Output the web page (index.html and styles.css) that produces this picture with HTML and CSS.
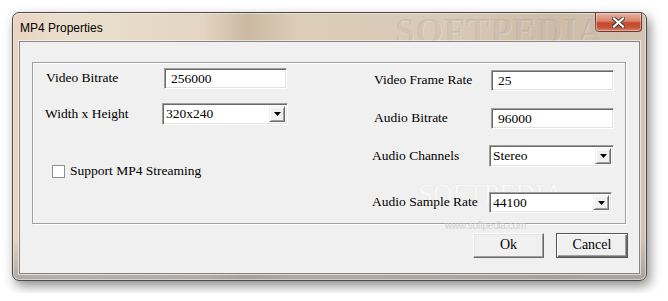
FILE: index.html
```html
<!DOCTYPE html>
<html lang="en">
<head>
  <meta charset="UTF-8">
  <meta name="viewport" content="width=device-width, initial-scale=1.0">
  <title>MP4 Properties</title>
  <link rel="stylesheet" href="styles.css">
</head>
<body>

  <div class="window">
    <div class="titlebar">
      <span class="title">MP4 Properties</span>
      <button class="close" type="button" aria-label="Close">
        <svg width="13" height="11" viewBox="0 0 13 11">
          <path d="M2 1.5 L11 9.5 M11 1.5 L2 9.5" stroke="#3a3a3a" stroke-width="4" stroke-linecap="square"/>
          <path d="M2 1.5 L11 9.5 M11 1.5 L2 9.5" stroke="#ffffff" stroke-width="2.2" stroke-linecap="square"/>
        </svg>
      </button>
    </div>
    <span class="mark-title">SOFTPEDIA</span>

    <div class="client">
      <span class="mark-mid">SOFTPEDIA<sup>™</sup></span>
      <span class="mark-url">www.softpedia.com</span>

      <div class="group">
        <div class="col col-left">
          <div class="row row-first">
            <label class="lbl lbl-wide" for="video_bitrate">Video Bitrate</label>
            <input class="field" type="text" id="video_bitrate" value="256000">
          </div>
          <div class="row row-size">
            <span class="lbl">Width x Height</span>
            <div class="combo combo-size">
              <span class="combo-value">320x240</span>
              <span class="combo-drop"><svg width="7" height="4" viewBox="0 0 7 4"><path d="M0 0 H7 L3.5 4 Z" fill="#000"/></svg></span>
            </div>
          </div>
          <div class="row row-check">
            <span class="check"></span>
            <span class="check-text">Support MP4 Streaming</span>
          </div>
        </div>

        <div class="col col-right">
          <div class="row row-frame">
            <label class="lbl lbl-in" for="frame_rate">Video Frame Rate</label>
            <input class="field" type="text" id="frame_rate" value="25">
          </div>
          <div class="row row-abitrate">
            <label class="lbl lbl-in" for="audio_bitrate">Audio Bitrate</label>
            <input class="field" type="text" id="audio_bitrate" value="96000">
          </div>
          <div class="row row-channels">
            <span class="lbl">Audio Channels</span>
            <div class="combo combo-wide">
              <span class="combo-value">Stereo</span>
              <span class="combo-drop"><svg width="7" height="4" viewBox="0 0 7 4"><path d="M0 0 H7 L3.5 4 Z" fill="#000"/></svg></span>
            </div>
          </div>
          <div class="row row-sample">
            <span class="lbl">Audio Sample Rate</span>
            <div class="combo combo-sample">
              <span class="combo-value">44100</span>
              <span class="combo-drop"><svg width="7" height="4" viewBox="0 0 7 4"><path d="M0 0 H7 L3.5 4 Z" fill="#000"/></svg></span>
            </div>
          </div>
        </div>
      </div>

      <div class="actions">
        <button class="btn" type="button">Ok</button>
        <button class="btn btn-default" type="button">Cancel</button>
      </div>
    </div>
  </div>

</body>
</html>
```

FILE: styles.css
```css
body {
  margin: 0;
  padding: 12px;
  background: #ffffff;
  font-family: 'Liberation Serif', serif;
  font-size: 13.5px;
  color: #000;
}

.window {
  position: relative;
  width: 635px;
  height: 269px;
  box-sizing: border-box;
  display: flex;
  flex-direction: column;
  padding: 0 6px 6px 6px;
  border: 1px solid #4d4a47;
  border-radius: 7px;
  background:
    linear-gradient(to bottom, rgba(255, 255, 255, 0) 84%, rgba(140, 140, 148, 0.6) 100%),
    linear-gradient(to right, #e8d3bf 0%, #eadfce 8%, #e3d5c2 30%, #cbb9a2 37%, #dccdb9 45%, #d8c9b6 70%, #cdbba6 85%, #d2c4b4 100%);
  box-shadow: 3px 5px 12px rgba(0, 0, 0, 0.45), inset 0 0 0 1px rgba(255, 255, 255, 0.45);
}

.titlebar {
  height: 28px;
  display: flex;
  align-items: center;
  padding-left: 1px;
}

.title {
  font-family: 'Liberation Sans', sans-serif;
  font-size: 12px;
  color: #000;
  margin-top: 1px;
}

.close {
  margin-left: auto;
  margin-right: -2px;
  align-self: flex-start;
  width: 47px;
  height: 19px;
  padding: 0;
  display: flex;
  align-items: center;
  justify-content: center;
  border: 1px solid #6e3a2e;
  border-top: none;
  border-radius: 0 0 4px 4px;
  background: linear-gradient(to bottom, #e6b3a2 0%, #d9826a 45%, #c44a2c 55%, #c6543a 80%, #d8856c 100%);
  box-shadow: inset 0 0 0 1px rgba(255, 255, 255, 0.35);
}

.mark-title {
  position: absolute;
  left: 382px;
  top: -1px;
  font-family: 'Liberation Serif', serif;
  font-weight: bold;
  font-size: 35px;
  letter-spacing: 1px;
  color: rgba(110, 96, 84, 0.15);
  text-shadow: 1px 1px 0 rgba(255, 255, 255, 0.2);
  pointer-events: none;
}

.client {
  position: relative;
  flex: 1;
  background: #f0f0f0;
  border: 1px solid #8a8580;
  box-shadow: 0 0 0 1px rgba(255, 255, 255, 0.55);
  padding: 20px 11px 0 12px;
  display: flex;
  flex-direction: column;
}

.group {
  position: relative;
  z-index: 1;
  width: 594px;
  height: 162px;
  box-sizing: border-box;
  border: 1px solid #a0a0a0;
  box-shadow: inset 1px 1px 0 #ffffff, 1px 1px 0 #ffffff;
  display: flex;
}

.col {
  display: flex;
  flex-direction: column;
}

.col-left {
  width: 339px;
  box-sizing: border-box;
  padding-left: 12px;
}

.row {
  display: flex;
  align-items: center;
}

.lbl {
  width: 117px;
  flex-shrink: 0;
  margin-top: -1px;
}

.lbl-wide {
  padding-left: 1px;
  box-sizing: border-box;
  width: 119px;
}

.lbl-in {
  padding-left: 2px;
  box-sizing: border-box;
  width: 119px;
}

.row-first { margin-top: 5px; }
.row-size { margin-top: 14px; }
.row-check { margin-top: 39px; padding-left: 7px; }

.row-frame { margin-top: 7px; }
.row-abitrate { margin-top: 17px; }
.row-channels { margin-top: 16px; }
.row-sample { margin-top: 25px; }

.field {
  width: 123px;
  height: 21px;
  box-sizing: border-box;
  margin: 0;
  padding: 0 6px;
  font-family: 'Liberation Serif', serif;
  font-size: 13.5px;
  color: #000;
  background: #fff;
  border: 1px solid;
  border-color: #a0a0a0 #ffffff #ffffff #a0a0a0;
  box-shadow: inset 1px 1px 0 #696969, inset -1px -1px 0 #e3e3e3;
  outline: none;
}

.combo {
  width: 126px;
  height: 22px;
  box-sizing: border-box;
  display: flex;
  align-items: center;
  background: #fff;
  border: 1px solid;
  border-color: #a0a0a0 #ffffff #ffffff #a0a0a0;
  box-shadow: inset 1px 1px 0 #696969, inset -1px -1px 0 #e3e3e3;
  padding: 2px 2px 2px 3px;
}

.combo-wide { width: 125px; }
.combo-sample { width: 123px; height: 21px; }

.combo-value {
  flex: 1;
}

.combo-drop {
  width: 16px;
  height: 100%;
  box-sizing: border-box;
  display: flex;
  align-items: center;
  justify-content: center;
  background: #f0f0f0;
  border: 1px solid;
  border-color: #f0f0f0 #696969 #696969 #f0f0f0;
  box-shadow: inset 1px 1px 0 #ffffff, inset -1px -1px 0 #a0a0a0;
}

.check {
  width: 13px;
  height: 13px;
  box-sizing: border-box;
  background: #fff;
  border: 1px solid #8e8f8f;
  margin-right: 5px;
}

.check-text {
  margin-top: -1px;
}

.actions {
  display: flex;
  justify-content: flex-end;
  gap: 12px;
  margin-top: 9px;
}

.btn {
  width: 71px;
  height: 25px;
  box-sizing: border-box;
  padding: 0 0 2px 0;
  font-family: 'Liberation Serif', serif;
  font-size: 14px;
  color: #000;
  background: #f0f0f0;
  border: 1px solid;
  border-color: #ffffff #696969 #696969 #ffffff;
  box-shadow: inset -1px -1px 0 #a0a0a0, inset 1px 1px 0 #e3e3e3;
}

.btn-default {
  width: 72px;
  border: 1px solid #555;
  box-shadow: inset 1px 1px 0 #ffffff, inset -1px -1px 0 #696969, inset -2px -2px 0 #a0a0a0;
}

.mark-mid {
  position: absolute;
  z-index: 0;
  left: 398px;
  top: 137px;
  font-family: 'Liberation Serif', serif;
  font-size: 27px;
  color: rgba(255, 255, 255, 0.8);
  text-shadow: 0 0 1px rgba(180, 180, 180, 0.35);
  pointer-events: none;
}

.mark-mid sup {
  font-size: 9px;
}

.mark-url {
  position: absolute;
  z-index: 2;
  left: 425px;
  top: 178px;
  font-family: 'Liberation Sans', sans-serif;
  font-size: 10px;
  letter-spacing: -0.3px;
  color: rgba(200, 200, 200, 0.8);
  pointer-events: none;
}
```
